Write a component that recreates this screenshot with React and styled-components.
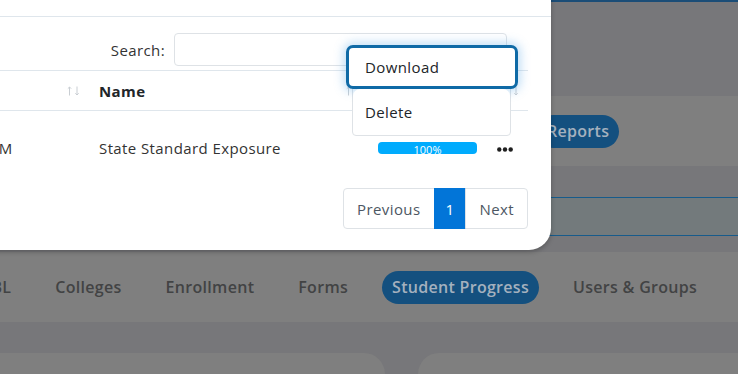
import React from 'react'
import styled, { createGlobalStyle } from 'styled-components'

const GlobalStyle = createGlobalStyle`
  html, body { margin: 0; padding: 0; }
  body {
    background: #77777a;
    font-family: 'Open Sans', 'Liberation Sans', sans-serif;
    letter-spacing: 0.4px;
    overflow: hidden;
  }
`

const Page = styled.div`
  position: relative;
  width: 738px;
  height: 374px;
  overflow: hidden;
  display: flex;
  flex-direction: column;
  background: #77777a;
`

const TopLine = styled.div`
  flex: none;
  height: 2px;
  background: #1b4d77;
`

const Gap = styled.div`
  flex: none;
  height: ${p => p.$h}px;
`

const NavBand = styled.div`
  flex: none;
  height: 70px;
  background: #7f7f7f;
  display: flex;
  align-items: center;
`

const TabList = styled.div`
  display: flex;
  align-items: center;
  gap: 24px;
  margin-left: ${p => p.$indent}px;
  white-space: nowrap;
`

const Tab = styled.div`
  padding: 6px 10px;
  line-height: 21px;
  border-radius: 17px;
  font-size: 16px;
  font-weight: 600;
  letter-spacing: 0.3px;
  color: ${p => (p.$active ? '#a4b1be' : '#424344')};
  background: ${p => (p.$active ? '#14507f' : 'transparent')};
`

const Strip = styled.div`
  flex: none;
  height: 37px;
  background: #737a7c;
  border-top: 1.5px solid #175b8b;
  border-bottom: 1.5px solid #175b8b;
`

const Cards = styled.div`
  flex: 1;
  display: grid;
  grid-template-columns: 405px 360px;
  gap: 33px;
  margin-left: -20px;
`

const Card = styled.div`
  background: #7f7f7f;
  border-radius: 26px 26px 0 0;
`

/* modal */

const Modal = styled.div`
  position: absolute;
  left: -190px;
  top: -60px;
  width: 741px;
  background: #fff;
  border-radius: 22px;
  box-shadow: 0 2px 5px rgba(0, 0, 0, 0.25);
`

const ModalHeader = styled.div`
  height: 76px;
  border-bottom: 1px solid #dfe6ec;
`

const ModalBody = styled.div`
  padding: 16px 23px 21px;
`

const SearchRow = styled.label`
  display: flex;
  justify-content: flex-end;
  align-items: center;
  gap: 9px;
  padding-right: 21px;
  font-size: 15px;
  color: #333;
`

const SearchInput = styled.input`
  width: 333px;
  height: 33px;
  box-sizing: border-box;
  border: 1px solid #dee2e6;
  border-radius: 4px;
  outline: none;
`

const TableWrap = styled.div`
  margin-top: 4px;
`

const Table = styled.table`
  width: 695px;
  table-layout: fixed;
  border-collapse: collapse;
  font-size: 15px;
  color: #333;
`

const Th = styled.th`
  box-sizing: border-box;
  width: ${p => p.$w}px;
  height: 40px;
  padding: 0 9px 0 10px;
  border-top: 1px solid #dfe6ec;
  border-bottom: 1px solid #dfe6ec;
  text-align: left;
  font-weight: 700;
  color: #212529;
  white-space: nowrap;
`

const ThInner = styled.div`
  display: flex;
  align-items: center;
  justify-content: space-between;
`

const Td = styled.td`
  height: 74px;
  padding: 0 10px;
  vertical-align: middle;
  white-space: nowrap;
  overflow: ${p => (p.$clip ? 'hidden' : 'visible')};
`

const Progress = styled.div`
  width: 99px;
  height: 12px;
  border-radius: 4px;
  background: #00abfd;
  overflow: hidden;
  color: #fff;
  font-size: 11px;
  letter-spacing: 0;
  line-height: 16px;
  text-align: center;
`

const Dropdown = styled.div`
  position: relative;
  display: inline-block;
  vertical-align: middle;
`

const Toggle = styled.button`
  display: flex;
  align-items: center;
  height: 16px;
  padding: 0;
  border: 0;
  background: none;
`

const Menu = styled.div`
  position: absolute;
  right: 2px;
  bottom: calc(100% + 6px);
  width: 159px;
  box-sizing: border-box;
  border: 1px solid #dee2e6;
  border-radius: 4px;
  background: #fff;
`

const Item = styled.div`
  height: ${p => (p.$focused ? 38 : 46)}px;
  display: flex;
  align-items: center;
  font-size: 15px;
  color: #212529;
  padding-left: ${p => (p.$focused ? 16 : 12)}px;
  border: ${p => (p.$focused ? '3px solid #0f6aa6' : '0')};
  border-radius: 7px;
  margin: ${p => (p.$focused ? '-2px -8px 0 -7px' : '0')};
  background: #fff;
  box-shadow: ${p => (p.$focused ? '0 0 10px 3px rgba(90, 165, 230, 0.35)' : 'none')};
  position: relative;
`

const Pager = styled.div`
  display: flex;
  justify-content: flex-end;
  margin-top: 3px;
`

const PageLink = styled.div`
  height: 41px;
  box-sizing: border-box;
  display: flex;
  align-items: center;
  padding: 0 ${p => p.$pad}px;
  font-size: 15px;
  color: ${p => (p.$active ? '#fff' : '#4d5763')};
  background: ${p => (p.$active ? '#0275d8' : '#fff')};
  border: 1px solid ${p => (p.$active ? '#0275d8' : '#dee2e6')};
  margin-left: -1px;
  &:first-child { border-radius: 4px 0 0 4px; }
  &:last-child { border-radius: 0 4px 4px 0; }
`

function SortIcon() {
  return (
    <svg width="13" height="10" viewBox="0 0 13 10" fill="none" stroke="#c9ced3" strokeWidth="1">
      <path d="M2.5 9.5V1M0.8 2.7L2.5 1l1.7 1.7" />
      <path d="M10 0.5V9M8.3 7.3L10 9l1.7-1.7" />
    </svg>
  )
}

function Ellipsis() {
  return (
    <svg width="16" height="5" viewBox="0 0 16 5" fill="#1f1f1f">
      <circle cx="2.3" cy="2.5" r="2.2" />
      <circle cx="8" cy="2.5" r="2.2" />
      <circle cx="13.7" cy="2.5" r="2.2" />
    </svg>
  )
}

export default function App() {
  return (
    <>
      <GlobalStyle />
      <Page>
        <TopLine />
        <Gap $h={94} />
        <NavBand>
          <TabList $indent={537}>
            <Tab $active>Reports</Tab>
          </TabList>
        </NavBand>
        <Gap $h={31} />
        <Strip />
        <Gap $h={16} />
        <NavBand>
          <TabList $indent={-34}>
            <Tab>WBL</Tab>
            <Tab>Colleges</Tab>
            <Tab>Enrollment</Tab>
            <Tab>Forms</Tab>
            <Tab $active>Student Progress</Tab>
            <Tab>Users &amp; Groups</Tab>
          </TabList>
        </NavBand>
        <Gap $h={31} />
        <Cards>
          <Card />
          <Card />
        </Cards>

        <Modal>
          <ModalHeader />
          <ModalBody>
            <SearchRow>
              Search:
              <SearchInput type="search" />
            </SearchRow>
            <TableWrap>
              <Table>
                <thead>
                  <tr>
                    <Th $w={256}><ThInner>Date Created<SortIcon /></ThInner></Th>
                    <Th $w={279}><ThInner>Name<SortIcon /></ThInner></Th>
                    <Th $w={119}></Th>
                    <Th $w={41}><ThInner><span /><SortIcon /></ThInner></Th>
                  </tr>
                </thead>
                <tbody>
                  <tr>
                    <Td $clip>Apr 15, 2024, 10:32 AM</Td>
                    <Td>State Standard Exposure</Td>
                    <Td><Progress>100%</Progress></Td>
                    <Td>
                      <Dropdown>
                        <Toggle><Ellipsis /></Toggle>
                        <Menu>
                          <Item $focused>Download</Item>
                          <Item>Delete</Item>
                        </Menu>
                      </Dropdown>
                    </Td>
                  </tr>
                </tbody>
              </Table>
            </TableWrap>
            <Pager>
              <PageLink $pad={13}>Previous</PageLink>
              <PageLink $pad={11} $active>1</PageLink>
              <PageLink $pad={13}>Next</PageLink>
            </Pager>
          </ModalBody>
        </Modal>
      </Page>
    </>
  )
}
